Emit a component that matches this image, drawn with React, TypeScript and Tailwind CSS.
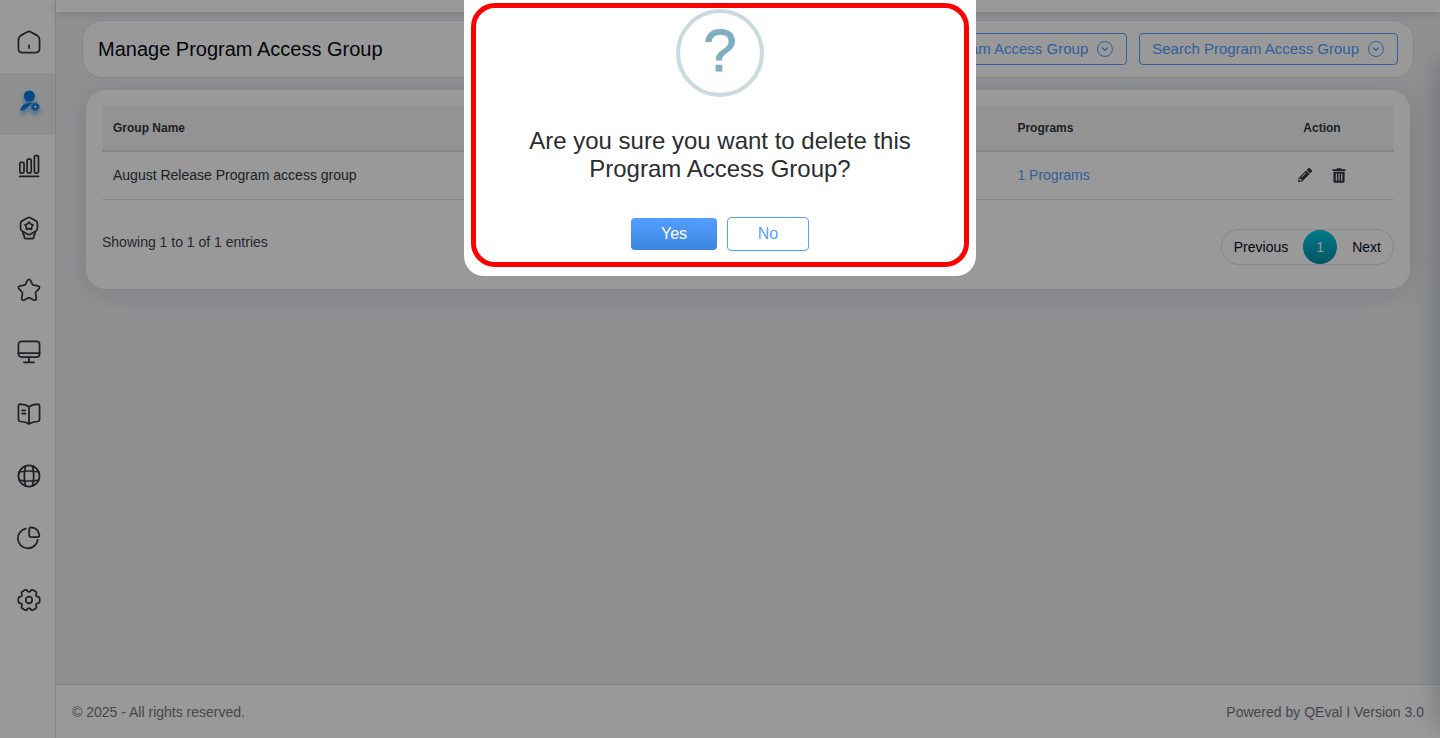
import React from 'react';
import { FaPencilAlt } from 'react-icons/fa';
import clsx from 'clsx';

interface MenuItem {
  label: string;
  icon: React.ReactNode;
  active?: boolean;
}

interface AccessGroup {
  id: number;
  name: string;
  programs: number;
}

const Icon = ({ children }: { children: React.ReactNode }) => (
  <svg
    viewBox="-0.5 -0.5 25 25"
    className="size-6"
    fill="none"
    stroke="currentColor"
    strokeWidth="1.8"
    strokeLinecap="round"
    strokeLinejoin="round"
    aria-hidden="true"
  >
    {children}
  </svg>
);

const menu: MenuItem[] = [
  {
    label: 'Home',
    icon: (
      <Icon>
        <path d="M10.2 1.5Q12 .5 13.8 1.5L20.3 5.1Q23 6.7 23 9.6V18.8Q23 23 18.8 23H5.2Q1 23 1 18.8V9.6Q1 6.7 3.7 5.1Z" />
        <path d="M12 15.5V18.3" />
      </Icon>
    ),
  },
  {
    label: 'User management',
    active: true,
    icon: (
      <svg
        viewBox="0 0 24 24"
        className="size-6 overflow-visible text-[#007be0] drop-shadow-[0_4px_2px_rgba(0,123,224,0.6)]"
        fill="currentColor"
        aria-hidden="true"
      >
        <circle cx="12.3" cy="4" r="5.5" />
        <path d="M3.2 18.8C4.2 13.8 7.4 11 12 11C13.4 11 14.4 11.2 15.2 11.6C12.6 12.6 11.6 14.6 9.6 16.1C8 17.4 5.8 18.4 3.2 18.8Z" />
        <circle
          cx="18.3"
          cy="14.8"
          r="2.4"
          fill="none"
          stroke="currentColor"
          strokeWidth="1.8"
        />
        <circle
          cx="18.3"
          cy="14.8"
          r="3.7"
          fill="none"
          stroke="currentColor"
          strokeWidth="1.6"
          strokeDasharray="1.5 1.406"
        />
      </svg>
    ),
  },
  {
    label: 'Reports',
    icon: (
      <Icon>
        <rect x="2.5" y="8.2" width="4.3" height="11.2" rx="1.3" />
        <rect x="10" y="4.9" width="4.3" height="14.5" rx="1.3" />
        <rect x="17.6" y="1.2" width="4.3" height="18.2" rx="1.3" />
        <path d="M2.2 22.7H22" />
      </Icon>
    ),
  },
  {
    label: 'Quality',
    icon: (
      <Icon>
        <path d="M10.6 1.3Q12 .5 13.4 1.3L19.3 4.6Q20.8 5.5 20.8 7.2V12.6Q20.8 14.3 19.3 15.2L13.4 18.5Q12 19.3 10.6 18.5L4.7 15.2Q3.2 14.3 3.2 12.6V7.2Q3.2 5.5 4.7 4.6Z" />
        <path d="M5.8 16.5V18Q5.8 19.2 7 19.4V21.2Q7 23 8.6 23H15.4Q17 23 17 21.2V19.4Q18.2 19.2 18.2 18V16.5" />
        <path d="M12 5.9L13.7 7.8L16.1 8.6L14.8 10.9L14.6 13.5L12 12.7L9.4 13.5L9.2 10.9L7.9 8.6L10.3 7.8Z" />
      </Icon>
    ),
  },
  {
    label: 'Favourites',
    icon: (
      <Icon>
        <path d="M10.3 2.1Q12-.3 13.7 2.1L15.6 6.2Q16 6.9 16.8 7L21.1 7.7Q24.2 8.5 22.3 10.8L19.2 14.1Q18.6 14.7 18.8 15.5L19.6 20.3Q19.7 23.5 16.8 22.4L12.9 20.3Q12 19.8 11.1 20.3L7.2 22.4Q4.3 23.5 4.4 20.3L5.2 15.5Q5.4 14.7 4.8 14.1L1.7 10.8Q-.2 8.5 2.9 7.7L7.2 7Q8 6.9 8.4 6.2Z" />
      </Icon>
    ),
  },
  {
    label: 'Monitoring',
    icon: (
      <Icon>
        <rect x="1" y="1" width="22" height="16.3" rx="3.2" />
        <path d="M1 13.1H23M12 17.3V22.7M6.7 22.7H17.3" />
      </Icon>
    ),
  },
  {
    label: 'Library',
    icon: (
      <Icon>
        <path d="M12 4.4Q8.6 2 3 1.8Q1 1.8 1 3.8V17.7Q1 19.5 3 19.8Q8.4 20.3 12 22.3Q15.6 20.3 21 19.8Q23 19.5 23 17.7V3.8Q23 1.8 21 1.8Q15.4 2 12 4.4ZM12 4.4V22.3M4.8 8.3H8M4.8 11.5H8.4" />
      </Icon>
    ),
  },
  {
    label: 'Language',
    icon: (
      <Icon>
        <circle cx="12" cy="12" r="11" />
        <path d="M8.4 1.6Q5.8 12 8.4 22.4M15.6 1.6Q18.2 12 15.6 22.4M1.9 7.7Q12 5.9 22.1 7.7M1.9 16.3Q12 18.1 22.1 16.3" />
      </Icon>
    ),
  },
  {
    label: 'Analytics',
    icon: (
      <Icon>
        <path d="M8.6 2.2A10.4 10.4 0 1 0 21.1 13.9" />
        <path d="M12.2 3.2Q12.2 1 14.4 1Q21.6 1.6 22.8 9Q23 11.2 20.8 11.2H14.4Q12.2 11.2 12.2 9Z" />
      </Icon>
    ),
  },
  {
    label: 'Settings',
    icon: (
      <Icon>
        <circle cx="12" cy="12" r="3.4" />
        <path d="M20.9 8.6Q23.1 8.6 23.1 10.4V13.6Q23.1 15.4 20.9 15.4Q18.6 15.8 19.4 18Q20.5 19.9 18.9 20.8L16.2 22.4Q14.6 23.3 13.5 21.4Q12 19.6 10.5 21.4Q9.4 23.3 7.8 22.4L5.1 20.8Q3.5 19.9 4.6 18Q5.4 15.8 3.1 15.4Q.9 15.4 .9 13.6V10.4Q.9 8.6 3.1 8.6Q5.4 8.2 4.6 6Q3.5 4.1 5.1 3.2L7.8 1.6Q9.4 .7 10.5 2.6Q12 4.4 13.5 2.6Q14.6 .7 16.2 1.6L18.9 3.2Q20.5 4.1 19.4 6Q18.6 8.2 20.9 8.6Z" />
      </Icon>
    ),
  },
];

const groups: AccessGroup[] = [
  { id: 1, name: 'August Release Program access group', programs: 1 },
];

const TrashIcon = () => (
  <svg viewBox="0 0 14 15" className="h-[15px] w-[14px]" aria-hidden="true">
    <path
      fill="currentColor"
      fillRule="evenodd"
      d="M.5 1.3H4.4L5 .3H9L9.6 1.3H13.5V3H.5ZM1.4 3.8H12.6V13.2Q12.6 14.7 11.1 14.7H2.9Q1.4 14.7 1.4 13.2ZM3.7 5.4V12.8H4.9V5.4ZM6.4 5.4V12.8H7.6V5.4ZM9.1 5.4V12.8H10.3V5.4Z"
    />
  </svg>
);

const OutlineButton = ({ label }: { label: string }) => (
  <button
    type="button"
    className="flex h-8 items-center gap-2 rounded border border-[#539fff] px-3 text-[15px] text-[#539fff]"
  >
    {label}
    <svg
      viewBox="0 0 18 18"
      className="size-[18px]"
      fill="none"
      stroke="currentColor"
      strokeLinecap="round"
      strokeLinejoin="round"
      aria-hidden="true"
    >
      <circle cx="9" cy="9" r="7.5" />
      <path strokeWidth="1.3" d="M6.5 8L9 10.3L11.5 8" />
    </svg>
  </button>
);

const Sidebar = () => (
  <aside className="w-14 shrink-0 border-r border-[#d4dce3] bg-white pt-[11px]">
    <nav>
      {menu.map(item => (
        <a
          key={item.label}
          href="#"
          aria-label={item.label}
          className={clsx(
            'flex h-[62px] items-center justify-center pl-0.5 text-[#32363b]',
            item.active && 'bg-[#eeeeee]'
          )}
        >
          {item.icon}
        </a>
      ))}
    </nav>
  </aside>
);

const GroupTable = () => (
  <section className="mx-1 rounded-[20px] bg-white p-4 pb-6 shadow-[0_4px_28px_rgba(70,80,90,0.2)]">
    <table className="w-full table-fixed text-left text-sm text-[#32363b]">
      <thead className="bg-[#f6f6f6] text-xs">
        <tr className="h-[45px] border-b-2 border-[#dbe1e6]">
          <th className="w-[70%] px-[11px]">Group Name</th>
          <th className="px-[11px]">Programs</th>
          <th className="w-36 text-center">Action</th>
        </tr>
      </thead>
      <tbody>
        {groups.map(group => (
          <tr key={group.id} className="h-12 border-b border-[#e3e5e8]">
            <td className="px-[11px]">{group.name}</td>
            <td className="px-[11px]">
              <a href="#" className="text-[#539fff]">
                {group.programs} Programs
              </a>
            </td>
            <td>
              <div className="flex items-center justify-center gap-5">
                <button type="button" aria-label="Edit">
                  <FaPencilAlt className="size-[14px]" />
                </button>
                <button type="button" aria-label="Delete">
                  <TrashIcon />
                </button>
              </div>
            </td>
          </tr>
        ))}
      </tbody>
    </table>
    <div className="mt-[29px] flex items-start justify-between text-sm">
      <p className="pt-[3px] text-[#3f4348]">Showing 1 to 1 of 1 entries</p>
      <div className="flex h-9 items-center rounded-full border border-[#dddfe2]">
        <button type="button" className="pr-[15px] pl-3">
          Previous
        </button>
        <button
          type="button"
          className="size-[34px] rounded-full bg-linear-to-b from-[#00c8e0] to-[#0090a8] text-white"
        >
          1
        </button>
        <button type="button" className="pr-3 pl-[15px]">
          Next
        </button>
      </div>
    </div>
  </section>
);

const ConfirmDialog = () => (
  <div className="fixed inset-0 flex items-start justify-center bg-black/40">
    <div
      role="dialog"
      aria-modal="true"
      aria-labelledby="confirm-title"
      className="w-lg rounded-b-[20px] bg-white px-[7px] pt-[3px] pb-[9px]"
    >
      <div className="flex flex-col items-center rounded-3xl border-[5px] border-[#ff0000] px-10 pt-px pb-[11px]">
        <div className="flex size-[88px] items-center justify-center rounded-full border-4 border-[#c9dae1] pb-1 text-[60px] leading-none text-[#80aec1] [-webkit-text-stroke:1px]">
          ?
        </div>
        <h2
          id="confirm-title"
          className="mt-[30px] text-center text-2xl leading-7 text-[#2b2d2f]"
        >
          Are you sure you want to delete this Program Access Group?
        </h2>
        <div className="mt-[34px] flex items-center gap-2.5">
          <button
            type="button"
            className="h-8 w-[86px] rounded bg-linear-to-b from-[#539fff] to-[#3c86e0] text-base text-white"
          >
            Yes
          </button>
          <button
            type="button"
            className="h-[34px] w-[82px] rounded border border-[#539fff] text-base text-[#539fff]"
          >
            No
          </button>
        </div>
      </div>
    </div>
  </div>
);

const App = () => {
  return (
    <div className="flex min-h-screen bg-[#eff1f4] font-['Liberation_Sans',Arial,sans-serif] text-[#060b14]">
      <Sidebar />
      <div className="flex min-w-0 flex-1 flex-col">
        <header className="h-3 bg-white shadow-[0_2px_8px_rgba(60,70,80,0.22)]" />
        <main className="flex-1 px-[26px] pt-2">
          <div className="mb-3 flex items-center justify-between rounded-[20px] border border-[#dce1e6] bg-white px-[15px] py-3">
            <h1 className="text-xl">Manage Program Access Group</h1>
            <div className="flex gap-3">
              <OutlineButton label="Add Program Access Group" />
              <OutlineButton label="Search Program Access Group" />
            </div>
          </div>
          <GroupTable />
        </main>
        <footer className="flex h-[54px] items-center justify-between border-t border-[#d4dce3] bg-white px-4 text-sm text-[#707683]">
          <p>© 2025 - All rights reserved.</p>
          <p>Powered by QEval I Version 3.0</p>
        </footer>
      </div>
      {/* closed drawer, only its shadow reaches the page */}
      <div className="fixed top-16 bottom-3 left-full w-80 bg-white shadow-[0_0_20px_rgba(69,90,100,0.28),0_0_42px_rgba(69,75,80,0.16)]" />
      <ConfirmDialog />
    </div>
  );
};

export default App;
